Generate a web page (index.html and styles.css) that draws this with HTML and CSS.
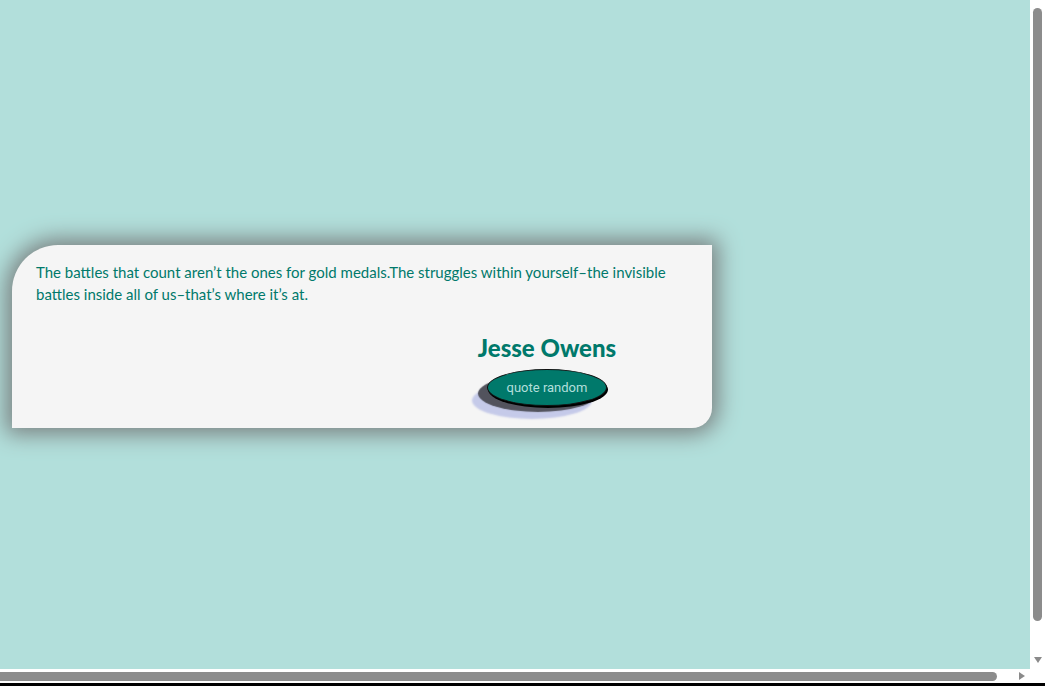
FILE: index.html
```html
<!DOCTYPE html>
<html lang="en">
<head>
<meta charset="utf-8">
<title>Random Quote</title>
<link rel="stylesheet" href="styles.css">
</head>
<body>
  <div class="page">
    <div class="quote-box">
      <p class="quote-text">The battles that count aren’t the ones for gold medals.The struggles within yourself–the invisible battles inside all of us–that’s where it’s at.</p>
      <div class="quote-footer">
        <div class="quote-meta">
          <h2 class="author">Jesse Owens</h2>
          <button class="btn-quote" type="button">quote random</button>
        </div>
      </div>
    </div>
  </div>

  <div class="hscroll" aria-hidden="true">
    <div class="hthumb"></div>
    <div class="arrow-right"></div>
  </div>
  <div class="vscroll" aria-hidden="true">
    <div class="vthumb"></div>
    <div class="arrow-down"></div>
  </div>
  <div class="frame-bottom" aria-hidden="true"></div>
</body>
</html>
```

FILE: styles.css
```css
html {
  background: #b2dfdb;
}
body {
  margin: 0;
  min-height: 100vh;
  background: #b2dfdb;
}
.page {
  padding: 245px 0 0 12px;
}
.quote-box {
  width: 700px;
  box-sizing: border-box;
  background: #f5f5f5;
  border-radius: 46px 0 20px 0;
  box-shadow: 0 0 22px 6px #7a8080;
  padding: 16px 24px 22px 24px;
}
.quote-text {
  margin: 0;
  font-family: "Lato", "Open Sans", sans-serif;
  font-size: 15px;
  line-height: 22px;
  color: #00796b;
}
.quote-footer {
  display: flex;
  justify-content: flex-end;
  padding-right: 41px;
  margin-top: 28px;
}
.quote-meta {
  width: 200px;
  display: flex;
  flex-direction: column;
  align-items: center;
}
.author {
  margin: 0;
  font-family: "Lato", "Open Sans", sans-serif;
  font-weight: 900;
  font-size: 24px;
  line-height: 30px;
  color: #00796b;
}
.btn-quote {
  margin-top: 6px;
  width: 120px;
  height: 37px;
  border: 1px solid #111;
  border-radius: 50%;
  background: #00796b;
  color: #b2dfdb;
  font-family: "Roboto", "Liberation Sans", sans-serif;
  font-size: 13px;
  box-shadow: 1px 2px 0 #000, -9px 6px 1px #52535d, -15px 13px 2px #c5cae9;
}

/* browser scrollbars, drawn over the page */
.vscroll {
  position: fixed;
  top: 0;
  right: 0;
  width: 15px;
  height: 669px;
  background: #ffffff;
  display: flex;
  flex-direction: column;
  align-items: center;
}
.vthumb {
  margin-top: 8px;
  width: 9px;
  height: 613px;
  border-radius: 5px;
  background: #8c8c8c;
}
.arrow-down {
  margin-top: 36px;
  width: 0;
  height: 0;
  border-left: 4px solid transparent;
  border-right: 4px solid transparent;
  border-top: 6px solid #8a8a8a;
}
.hscroll {
  position: fixed;
  left: 0;
  right: 0;
  bottom: 3px;
  height: 14px;
  background: #ffffff;
  display: flex;
  align-items: center;
}
.hthumb {
  width: 997px;
  height: 9px;
  border-radius: 0 5px 5px 0;
  background: #8c8c8c;
}
.arrow-right {
  margin-left: 22px;
  width: 0;
  height: 0;
  border-top: 4px solid transparent;
  border-bottom: 4px solid transparent;
  border-left: 6px solid #8a8a8a;
}
.frame-bottom {
  position: fixed;
  left: 0;
  right: 0;
  bottom: 0;
  height: 3px;
  background: #000000;
}
```
